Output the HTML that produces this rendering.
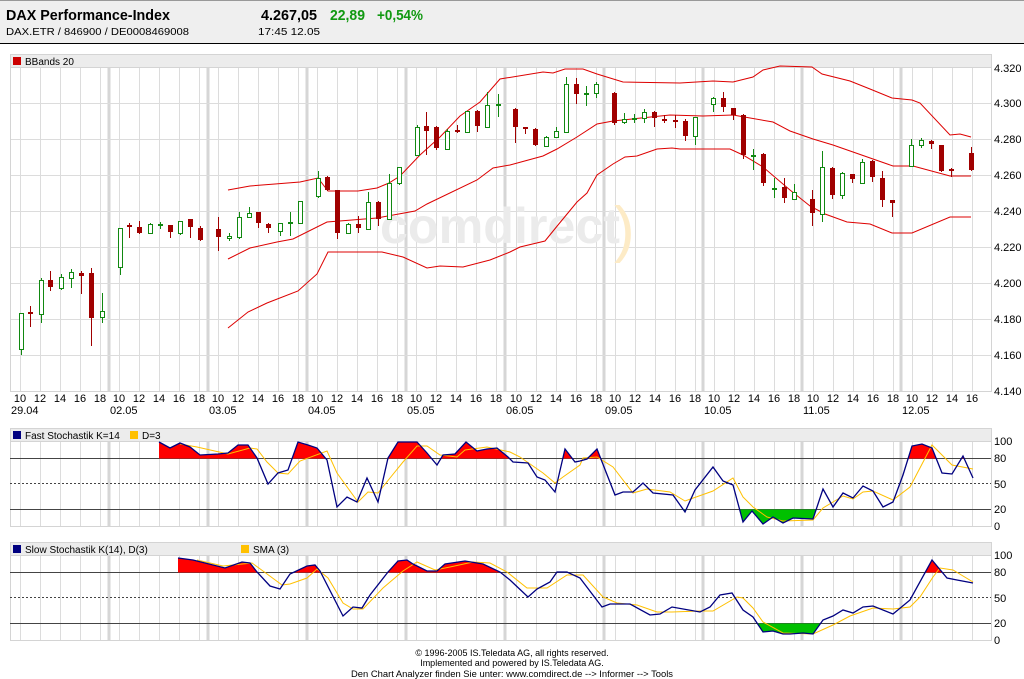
<!DOCTYPE html>
<html><head><meta charset="utf-8"><style>
html,body{margin:0;padding:0;background:#fff;width:1024px;height:679px;overflow:hidden}
svg{display:block;font-family:"Liberation Sans",Arial,sans-serif}
</style></head><body>
<svg width="1024" height="679" viewBox="0 0 1024 679" xmlns="http://www.w3.org/2000/svg">
<defs>
<path id="vg" d="M20.5 0V1M40.5 0V1M60.5 0V1M80.5 0V1M100.5 0V1M119.5 0V1M139.5 0V1M159.5 0V1M179.5 0V1M199.5 0V1M218.5 0V1M238.5 0V1M258.5 0V1M278.5 0V1M298.5 0V1M317.5 0V1M337.5 0V1M357.5 0V1M377.5 0V1M397.5 0V1M416.5 0V1M436.5 0V1M456.5 0V1M476.5 0V1M496.5 0V1M516.5 0V1M536.5 0V1M556.5 0V1M576.5 0V1M596.5 0V1M615.5 0V1M635.5 0V1M655.5 0V1M675.5 0V1M695.5 0V1M714.5 0V1M734.5 0V1M754.5 0V1M774.5 0V1M794.5 0V1M813.5 0V1M833.5 0V1M853.5 0V1M873.5 0V1M893.5 0V1M912.5 0V1M932.5 0V1M952.5 0V1M972.5 0V1" stroke="#dcdcdc" stroke-width="1" vector-effect="non-scaling-stroke" fill="none"/>
<path id="vs" d="M109 0V1M208 0V1M307 0V1M406 0V1M505 0V1M604 0V1M703 0V1M802 0V1M901 0V1" stroke="#d6d6d6" stroke-width="3" vector-effect="non-scaling-stroke" fill="none"/>
<clipPath id="cfr"><rect x="0" y="440" width="1000" height="18.5"/></clipPath>
<clipPath id="cfg"><rect x="0" y="509.5" width="1000" height="20"/></clipPath>
<clipPath id="csr"><rect x="0" y="555" width="1000" height="17.5"/></clipPath>
<clipPath id="csg"><rect x="0" y="623.5" width="1000" height="20"/></clipPath>
</defs>

<!-- header -->
<rect x="0" y="0" width="1024" height="43" fill="#efefef"/>
<rect x="0" y="0" width="1024" height="1" fill="#999"/>
<rect x="0" y="43" width="1024" height="1" fill="#000"/>
<text x="6" y="20" font-size="14.5" font-weight="bold" textLength="164" lengthAdjust="spacingAndGlyphs">DAX Performance-Index</text>
<text x="6" y="35" font-size="10" textLength="183" lengthAdjust="spacingAndGlyphs">DAX.ETR  /  846900  /  DE0008469008</text>
<text x="261" y="20" font-size="14.5" font-weight="bold" textLength="56" lengthAdjust="spacingAndGlyphs">4.267,05</text>
<text x="330" y="20" font-size="14.5" font-weight="bold" fill="#119911" textLength="35" lengthAdjust="spacingAndGlyphs">22,89</text>
<text x="377" y="20" font-size="14.5" font-weight="bold" fill="#119911" textLength="46" lengthAdjust="spacingAndGlyphs">+0,54%</text>
<text x="258" y="35" font-size="10" textLength="62" lengthAdjust="spacingAndGlyphs">17:45   12.05</text>

<!-- MAIN PANEL -->
<rect x="10.5" y="54.5" width="981" height="13" fill="#ececec" stroke="#d4d4d4"/>
<rect x="13" y="57" width="8" height="8" fill="#cc0000"/>
<text x="25" y="65" font-size="10">BBands 20</text>
<use href="#vg" transform="translate(0,68) scale(1,323)"/>
<use href="#vs" transform="translate(0,68) scale(1,323)"/>
<path d="M10 103.5H991M10 139.5H991M10 175.5H991M10 211.5H991M10 247.5H991M10 283.5H991M10 319.5H991M10 355.5H991" stroke="#dcdcdc"/>
<path d="M10.5 68V391M991.5 54V391M10 391.5H992" stroke="#d4d4d4" fill="none"/>
<g font-size="11">
<text x="994" y="72">4.320</text><text x="994" y="107">4.300</text><text x="994" y="143">4.280</text><text x="994" y="179">4.260</text><text x="994" y="215">4.240</text><text x="994" y="251">4.220</text><text x="994" y="287">4.200</text><text x="994" y="323">4.180</text><text x="994" y="359">4.160</text><text x="994" y="395">4.140</text>
</g>
<!-- watermark -->
<text x="380" y="243" font-size="50" font-weight="bold" fill="#ebebeb" textLength="240" lengthAdjust="spacingAndGlyphs">comdirect</text>
<text x="614" y="250" font-size="62" fill="#fdebc6">)</text>

<!-- bands -->
<g fill="none" stroke="#dd0000" stroke-width="1">
<polyline points="228,190 250,186 275,184 300,182 318,178 328,191 358,191 377,188 389,183 400,176 420,155 440,137 460,116 480,102 500,79 543,72 553,73 565,69 583,69 597,74 623,82 680,83 713,81 733,82 753,77 763,70 780,66 812,67 822,74 850,81 870,89 892,98 912,100 920,103 950,135 960,134 971,137"/>
<polyline points="228,259 250,248 277,242 293,239 327,222 377,218 415,211 427,204 477,180 493,168 510,165 543,156 557,149 577,137 597,124 613,121 670,115 703,116 733,115 773,122 790,131 813,139 833,145 893,166 913,166 950,176 971,176"/>
<polyline points="228,328 248,312 267,303 298,291 317,274 328,252 353,252 382,252 403,257 427,268 440,266 463,267 490,260 510,252 520,247 545,241 558,225 577,202 587,193 597,175 613,164 625,157 637,156 657,149 672,148 680,149 730,149 743,155 763,167 790,190 810,206 825,214 847,222 870,224 892,233 912,233 950,217 971,217"/>
</g>

<!-- red candles -->
<g stroke="#a00000" fill="#a00000">
<path d="M30.5 306V327M50.5 271V291M81.5 271V294M91.5 268V346M129.5 223V238M139.5 221V234M170.5 225V238M190.5 219V238M200.5 226V241M218.5 217V251M258.5 212V228M268.5 223V233M327.5 176V191M337.5 190V239M358.5 216V233M378.5 201V226M426.5 112V155M436.5 126V150M457.5 125V133M477.5 110V132M515.5 108V143M525.5 127V134M535.5 128V146M576.5 78V104M614.5 92V125M654.5 111V127M664.5 115V123M675.5 115V128M685.5 119V141M723.5 92V112M733.5 108V120M743.5 114V159M763.5 153V186M784.5 178V203M812.5 190V226M832.5 167V199M852.5 174V183M872.5 160V182M882.5 171V207M892.5 200V217M931.5 140V149M941.5 145V172M951.5 168V177M971.5 147V171"/>
<g stroke="none">
<rect x="28" y="312" width="5" height="2"/><rect x="48" y="280" width="5" height="7"/><rect x="79" y="273" width="5" height="3"/><rect x="89" y="273" width="5" height="45"/>
<rect x="127" y="225" width="5" height="2"/><rect x="137" y="227" width="5" height="6"/><rect x="168" y="225" width="5" height="7"/><rect x="188" y="219" width="5" height="8"/><rect x="198" y="228" width="5" height="12"/>
<rect x="216" y="229" width="5" height="8"/><rect x="256" y="212" width="5" height="11"/><rect x="266" y="224" width="5" height="4"/><rect x="325" y="177" width="5" height="13"/><rect x="335" y="190" width="5" height="43"/>
<rect x="356" y="224" width="5" height="4"/><rect x="376" y="202" width="5" height="17"/><rect x="424" y="126" width="5" height="5"/><rect x="434" y="127" width="5" height="21"/><rect x="455" y="130" width="5" height="2"/>
<rect x="475" y="111" width="5" height="15"/><rect x="513" y="109" width="5" height="18"/><rect x="523" y="127" width="5" height="2"/><rect x="533" y="129" width="5" height="16"/><rect x="574" y="84" width="5" height="10"/>
<rect x="612" y="93" width="5" height="30"/><rect x="652" y="112" width="5" height="6"/><rect x="662" y="119" width="5" height="2"/><rect x="673" y="120" width="5" height="2"/><rect x="683" y="121" width="5" height="15"/>
<rect x="721" y="98" width="5" height="9"/><rect x="731" y="108" width="5" height="7"/><rect x="741" y="115" width="5" height="40"/><rect x="761" y="154" width="5" height="29"/><rect x="782" y="187" width="5" height="11"/>
<rect x="810" y="199" width="5" height="14"/><rect x="830" y="168" width="5" height="27"/><rect x="850" y="174" width="5" height="5"/><rect x="870" y="161" width="5" height="16"/><rect x="880" y="178" width="5" height="22"/>
<rect x="890" y="200" width="5" height="3"/><rect x="929" y="141" width="5" height="3"/><rect x="939" y="145" width="5" height="26"/><rect x="949" y="169" width="5" height="2"/><rect x="969" y="153" width="5" height="17"/>
</g></g>

<!-- green candles -->
<g stroke="#118811" fill="#fff">
<path fill="none" d="M21.5 313V355M41.5 278V323M61.5 274V290M71.5 269V288M102.5 293V323M120.5 228V275M150.5 223V234M160.5 222V229M180.5 221V235M229.5 233V241M239.5 212V239M249.5 207V217M280.5 223V236M290.5 212V236M300.5 201V223M318.5 171V198M348.5 223V234M368.5 192V230M389.5 174V220M399.5 167V185M417.5 125V156M447.5 129V150M467.5 111V133M487.5 92V128M498.5 94V117M546.5 136V147M556.5 127V138M566.5 77V132M586.5 86V106M596.5 82V98M624.5 113V124M634.5 114V123M644.5 109V123M695.5 117V145M713.5 97V112M753.5 149V170M774.5 178V198M794.5 184V200M822.5 151V222M842.5 172V199M862.5 159V183M911.5 139V166M921.5 138V148"/>
<rect x="19.5" y="313.5" width="4" height="36"/><rect x="39.5" y="280.5" width="4" height="34"/><rect x="59.5" y="277.5" width="4" height="11"/><rect x="69.5" y="272.5" width="4" height="6"/><rect x="100.5" y="311.5" width="4" height="6"/>
<rect x="118.5" y="228.5" width="4" height="39"/><rect x="148.5" y="224.5" width="4" height="9"/><rect x="158.5" y="224.5" width="4" height="1"/><rect x="178.5" y="221.5" width="4" height="12"/><rect x="227.5" y="236.5" width="4" height="2"/>
<rect x="237.5" y="217.5" width="4" height="20"/><rect x="247.5" y="213.5" width="4" height="4"/><rect x="278.5" y="223.5" width="4" height="8"/><rect x="288.5" y="222.5" width="4" height="1"/><rect x="298.5" y="201.5" width="4" height="22"/>
<rect x="316.5" y="178.5" width="4" height="18"/><rect x="346.5" y="224.5" width="4" height="9"/><rect x="366.5" y="202.5" width="4" height="27"/><rect x="387.5" y="183.5" width="4" height="36"/><rect x="397.5" y="167.5" width="4" height="16"/>
<rect x="415.5" y="127.5" width="4" height="28"/><rect x="445.5" y="131.5" width="4" height="18"/><rect x="465.5" y="111.5" width="4" height="21"/><rect x="485.5" y="105.5" width="4" height="22"/><rect x="496.5" y="104.5" width="4" height="1"/>
<rect x="544.5" y="137.5" width="4" height="9"/><rect x="554.5" y="131.5" width="4" height="6"/><rect x="564.5" y="84.5" width="4" height="48"/><rect x="584.5" y="93.5" width="4" height="1"/><rect x="594.5" y="84.5" width="4" height="9"/>
<rect x="622.5" y="119.5" width="4" height="3"/><rect x="632.5" y="118.5" width="4" height="1"/><rect x="642.5" y="112.5" width="4" height="6"/><rect x="693.5" y="117.5" width="4" height="19"/><rect x="711.5" y="98.5" width="4" height="6"/>
<rect x="751.5" y="155.5" width="4" height="1"/><rect x="772.5" y="188.5" width="4" height="1"/><rect x="792.5" y="192.5" width="4" height="7"/><rect x="820.5" y="167.5" width="4" height="47"/><rect x="840.5" y="173.5" width="4" height="22"/>
<rect x="860.5" y="162.5" width="4" height="21"/><rect x="909.5" y="145.5" width="4" height="21"/><rect x="919.5" y="140.5" width="4" height="5"/>
</g>

<!-- x axis labels -->
<g font-size="11" text-anchor="middle">
<text x="20" y="402">10</text><text x="40" y="402">12</text><text x="60" y="402">14</text><text x="80" y="402">16</text><text x="100" y="402">18</text>
<text x="119" y="402">10</text><text x="139" y="402">12</text><text x="159" y="402">14</text><text x="179" y="402">16</text><text x="199" y="402">18</text>
<text x="218" y="402">10</text><text x="238" y="402">12</text><text x="258" y="402">14</text><text x="278" y="402">16</text><text x="298" y="402">18</text>
<text x="317" y="402">10</text><text x="337" y="402">12</text><text x="357" y="402">14</text><text x="377" y="402">16</text><text x="397" y="402">18</text>
<text x="416" y="402">10</text><text x="436" y="402">12</text><text x="456" y="402">14</text><text x="476" y="402">16</text><text x="496" y="402">18</text>
<text x="516" y="402">10</text><text x="536" y="402">12</text><text x="556" y="402">14</text><text x="576" y="402">16</text><text x="596" y="402">18</text>
<text x="615" y="402">10</text><text x="635" y="402">12</text><text x="655" y="402">14</text><text x="675" y="402">16</text><text x="695" y="402">18</text>
<text x="714" y="402">10</text><text x="734" y="402">12</text><text x="754" y="402">14</text><text x="774" y="402">16</text><text x="794" y="402">18</text>
<text x="813" y="402">10</text><text x="833" y="402">12</text><text x="853" y="402">14</text><text x="873" y="402">16</text><text x="893" y="402">18</text>
<text x="912" y="402">10</text><text x="932" y="402">12</text><text x="952" y="402">14</text><text x="972" y="402">16</text>
</g>
<g font-size="11">
<text x="11" y="414">29.04</text><text x="110" y="414">02.05</text><text x="209" y="414">03.05</text><text x="308" y="414">04.05</text><text x="407" y="414">05.05</text><text x="506" y="414">06.05</text><text x="605" y="414">09.05</text><text x="704" y="414">10.05</text><text x="803" y="414">11.05</text><text x="902" y="414">12.05</text>
</g>

<!-- FAST STOCH -->
<rect x="10.5" y="428.5" width="981" height="13" fill="#ececec" stroke="#d4d4d4"/>
<rect x="13" y="431" width="8" height="8" fill="#000080"/>
<text x="25" y="439" font-size="10">Fast Stochastik K=14</text>
<rect x="130" y="431" width="8" height="8" fill="#ffc000"/>
<text x="142" y="439" font-size="10">D=3</text>
<use href="#vg" transform="translate(0,442) scale(1,84)"/>
<use href="#vs" transform="translate(0,442) scale(1,84)"/>
<path d="M10.5 442V526M991.5 428V526M10 526.5H992" stroke="#d4d4d4" fill="none"/>
<path d="M10 458.5H991M10 509.5H991" stroke="#444"/>
<path d="M10 483.5H991" stroke="#444" stroke-dasharray="2,2"/>
<g font-size="11"><text x="994" y="445">100</text><text x="994" y="462">80</text><text x="994" y="488">50</text><text x="994" y="513">20</text><text x="994" y="530">0</text></g>
<path clip-path="url(#cfr)" fill="#ff0000" d="M159,442 L170,448 180,443 190,447 200,455 218,454 228,453 238,445 248,445 257,458 268,484 278,473 288,470 298,442 308,445 317,448 327,460 337,507 347,497 357,502 367,478 378,502 388,458 398,442 417,442 427,453 437,465 443,455 455,454 466,442 477,451 487,449 497,448 508,457 513,462 528,463 537,477 545,480 555,492 565,449 575,462 580,461 587,459 597,449 615,495 623,492 633,492 643,483 653,493 673,495 685,512 695,490 713,467 723,481 733,485 743,522 752,511 763,524 773,517 783,523 793,518 813,519 823,489 833,507 843,493 853,498 863,486 873,491 883,507 893,502 903,475 912,446 922,444 932,448 942,473 952,474 963,456 973,478 L973,458.5 L159,458.5Z"/>
<path clip-path="url(#cfg)" fill="#00c000" d="M159,442 L170,448 180,443 190,447 200,455 218,454 228,453 238,445 248,445 257,458 268,484 278,473 288,470 298,442 308,445 317,448 327,460 337,507 347,497 357,502 367,478 378,502 388,458 398,442 417,442 427,453 437,465 443,455 455,454 466,442 477,451 487,449 497,448 508,457 513,462 528,463 537,477 545,480 555,492 565,449 575,462 580,461 587,459 597,449 615,495 623,492 633,492 643,483 653,493 673,495 685,512 695,490 713,467 723,481 733,485 743,522 752,511 763,524 773,517 783,523 793,518 813,519 823,489 833,507 843,493 853,498 863,486 873,491 883,507 893,502 903,475 912,446 922,444 932,448 942,473 952,474 963,456 973,478 L973,509.5 L159,509.5Z"/>
<polyline fill="none" stroke="#ffc000" stroke-width="1" points="180,444 197,447 228,454 250,448 257,449 267,462 278,473 288,474 300,461 327,451 337,473 358,502 368,492 378,493 390,478 403,462 417,446 427,446 440,455 457,457 465,450 487,447 510,452 520,457 543,473 555,483 563,477 580,465 583,458 597,457 613,467 633,493 647,489 670,492 685,501 713,491 733,478 743,497 753,507 767,517 783,521 813,520 823,508 843,496 853,499 863,492 873,491 893,500 910,487 932,445 952,465 973,469"/>
<polyline fill="none" stroke="#000080" stroke-width="1.3" points="159,442 170,448 180,443 190,447 200,455 218,454 228,453 238,445 248,445 257,458 268,484 278,473 288,470 298,442 308,445 317,448 327,460 337,507 347,497 357,502 367,478 378,502 388,458 398,442 417,442 427,453 437,465 443,455 455,454 466,442 477,451 487,449 497,448 508,457 513,462 528,463 537,477 545,480 555,492 565,449 575,462 580,461 587,459 597,449 615,495 623,492 633,492 643,483 653,493 673,495 685,512 695,490 713,467 723,481 733,485 743,522 752,511 763,524 773,517 783,523 793,518 813,519 823,489 833,507 843,493 853,498 863,486 873,491 883,507 893,502 903,475 912,446 922,444 932,448 942,473 952,474 963,456 973,478"/>

<!-- SLOW STOCH -->
<rect x="10.5" y="542.5" width="981" height="13" fill="#ececec" stroke="#d4d4d4"/>
<rect x="13" y="545" width="8" height="8" fill="#000080"/>
<text x="25" y="553" font-size="10">Slow Stochastik K(14), D(3)</text>
<rect x="241" y="545" width="8" height="8" fill="#ffc000"/>
<text x="253" y="553" font-size="10">SMA (3)</text>
<use href="#vg" transform="translate(0,556) scale(1,85)"/>
<use href="#vs" transform="translate(0,556) scale(1,85)"/>
<path d="M10.5 556V641M991.5 542V641M10 640.5H992" stroke="#d4d4d4" fill="none"/>
<path d="M10 572.5H991M10 623.5H991" stroke="#444"/>
<path d="M10 597.5H991" stroke="#444" stroke-dasharray="2,2"/>
<g font-size="11"><text x="994" y="559">100</text><text x="994" y="576">80</text><text x="994" y="602">50</text><text x="994" y="627">20</text><text x="994" y="644">0</text></g>
<path clip-path="url(#csr)" fill="#ff0000" d="M178,558 L193,560 225,568 242,562 250,563 257,572 270,586 280,589 290,574 307,566 315,565 320,571 343,616 353,607 362,608 370,595 388,572 398,561 407,560 413,564 427,571 437,571 445,564 465,561 483,564 500,572 510,580 528,597 537,589 550,582 557,572 567,572 580,578 602,607 610,604 630,604 650,615 660,614 672,607 700,612 710,607 720,595 732,593 743,610 753,617 763,632 773,631 783,634 790,634 803,633 813,634 823,620 833,616 843,610 853,613 863,607 873,606 893,614 910,600 932,560 947,578 957,580 973,583 L973,572.5 L178,572.5Z"/>
<path clip-path="url(#csg)" fill="#00c000" d="M178,558 L193,560 225,568 242,562 250,563 257,572 270,586 280,589 290,574 307,566 315,565 320,571 343,616 353,607 362,608 370,595 388,572 398,561 407,560 413,564 427,571 437,571 445,564 465,561 483,564 500,572 510,580 528,597 537,589 550,582 557,572 567,572 580,578 602,607 610,604 630,604 650,615 660,614 672,607 700,612 710,607 720,595 732,593 743,610 753,617 763,632 773,631 783,634 790,634 803,633 813,634 823,620 833,616 843,610 853,613 863,607 873,606 893,614 910,600 932,560 947,578 957,580 973,583 L973,623.5 L178,623.5Z"/>
<polyline fill="none" stroke="#ffc000" stroke-width="1" points="197,560 223,566 252,563 263,571 282,585 290,584 307,578 317,569 328,578 343,603 353,609 363,609 383,588 403,571 417,562 435,570 450,567 473,562 490,563 507,572 527,588 547,588 567,575 583,575 603,597 617,603 637,605 657,612 672,612 700,611 713,611 737,597 743,598 753,608 763,622 783,633 813,634 833,625 850,616 873,608 893,609 910,607 920,597 933,577 940,568 953,570 973,582"/>
<polyline fill="none" stroke="#000080" stroke-width="1.3" points="178,558 193,560 225,568 242,562 250,563 257,572 270,586 280,589 290,574 307,566 315,565 320,571 343,616 353,607 362,608 370,595 388,572 398,561 407,560 413,564 427,571 437,571 445,564 465,561 483,564 500,572 510,580 528,597 537,589 550,582 557,572 567,572 580,578 602,607 610,604 630,604 650,615 660,614 672,607 700,612 710,607 720,595 732,593 743,610 753,617 763,632 773,631 783,634 790,634 803,633 813,634 823,620 833,616 843,610 853,613 863,607 873,606 893,614 910,600 932,560 947,578 957,580 973,583"/>

<!-- footer -->
<g font-size="9" text-anchor="middle">
<text x="512" y="656">© 1996-2005 IS.Teledata AG, all rights reserved.</text>
<text x="512" y="666">Implemented and powered by IS.Teledata AG.</text>
<text x="512" y="677" textLength="322" lengthAdjust="spacingAndGlyphs">Den Chart Analyzer finden Sie unter: www.comdirect.de --&gt; Informer --&gt; Tools</text>
</g>
</svg>
</body></html>
